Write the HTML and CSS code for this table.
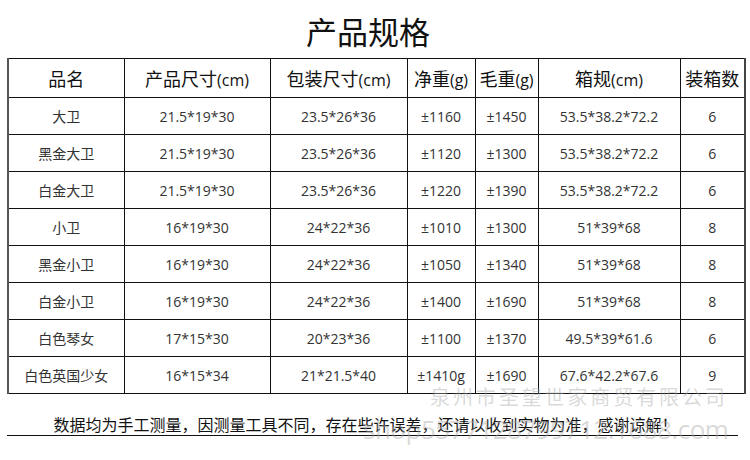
FILE: index.html
```
<!DOCTYPE html>
<html lang="zh">
<head>
<meta charset="utf-8">
<link rel="stylesheet" href="styles.css">
</head>
<body>
<div class="page">
  <h1 class="title">产品规格</h1>
  <table class="spec">
    <colgroup>
      <col style="width:116px"><col style="width:146px"><col style="width:137px"><col style="width:68px"><col style="width:63px"><col style="width:142px"><col style="width:65px">
    </colgroup>
    <thead>
      <tr><th>品名</th><th>产品尺寸<span class="lat">(cm)</span></th><th>包装尺寸<span class="lat">(cm)</span></th><th>净重<span class="lat">(g)</span></th><th>毛重<span class="lat">(g)</span></th><th>箱规<span class="lat">(cm)</span></th><th>装箱数</th></tr>
    </thead>
    <tbody>
      <tr><td>大卫</td><td>21.5*19*30</td><td>23.5*26*36</td><td>±1160</td><td>±1450</td><td>53.5*38.2*72.2</td><td>6</td></tr>
      <tr><td>黑金大卫</td><td>21.5*19*30</td><td>23.5*26*36</td><td>±1120</td><td>±1300</td><td>53.5*38.2*72.2</td><td>6</td></tr>
      <tr><td>白金大卫</td><td>21.5*19*30</td><td>23.5*26*36</td><td>±1220</td><td>±1390</td><td>53.5*38.2*72.2</td><td>6</td></tr>
      <tr><td>小卫</td><td>16*19*30</td><td>24*22*36</td><td>±1010</td><td>±1300</td><td>51*39*68</td><td>8</td></tr>
      <tr><td>黑金小卫</td><td>16*19*30</td><td>24*22*36</td><td>±1050</td><td>±1340</td><td>51*39*68</td><td>8</td></tr>
      <tr><td>白金小卫</td><td>16*19*30</td><td>24*22*36</td><td>±1400</td><td>±1690</td><td>51*39*68</td><td>8</td></tr>
      <tr><td>白色琴女</td><td>17*15*30</td><td>20*23*36</td><td>±1100</td><td>±1370</td><td>49.5*39*61.6</td><td>6</td></tr>
      <tr><td>白色英国少女</td><td>16*15*34</td><td>21*21.5*40</td><td>±1410g</td><td>±1690</td><td>67.6*42.2*67.6</td><td>9</td></tr>
    </tbody>
  </table>
  <p class="note">数据均为手工测量，因测量工具不同，存在些许误差，还请以收到实物为准，感谢谅解！</p>
  <div class="wm wm-name">泉州市圣望世家商贸有限公司</div>
  <div class="wm wm-url">shop5577128799712.1688.com</div>
</div>
</body>
</html>
```
FILE: styles.css
```
html, body {
  margin: 0;
  padding: 0;
  background: #fff;
}
.page {
  position: relative;
  width: 750px;
  height: 460px;
  overflow: hidden;
  font-family: "Open Sans", "Noto Sans CJK SC", sans-serif;
  color: #222;
}
.title {
  margin: 0;
  height: 58px;
  display: flex;
  align-items: center;
  justify-content: center;
  padding-right: 14px;
  box-sizing: border-box;
  font-family: "Noto Sans CJK SC", sans-serif;
  font-weight: 400;
  font-size: 31px;
  color: #111;
  padding-top: 2px;
}
.spec {
  margin-left: 7px;
  width: 737px;
  border-collapse: collapse;
  table-layout: fixed;
  border-left: 2px solid #555;
  border-right: 2px solid #444;
}
.spec th, .spec td {
  border: 1px solid #111;
  text-align: center;
  padding: 0;
  white-space: nowrap;
}
.spec th {
  height: 38px;
  font-family: "Noto Sans CJK SC", sans-serif;
  font-weight: 400;
  font-size: 18px;
  color: #111;
}
.spec th .lat {
  font-family: "Open Sans", sans-serif;
  font-size: 16px;
}
.spec td {
  height: 36px;
  font-size: 14px;
  color: #333;
}
.spec td:first-child {
  font-family: "Noto Sans CJK SC", sans-serif;
}
.note {
  margin: 19px 0 0 7px;
  width: 731px;
  padding: 0 14px 0 0;
  box-sizing: border-box;
  text-align: center;
  font-family: "Noto Sans CJK SC", sans-serif;
  font-size: 16px;
  line-height: 22px;
  color: #111;
  border-bottom: 1px solid #111;
}
.wm {
  position: absolute;
  color: rgba(170, 170, 170, 0.45);
  white-space: nowrap;
}
.wm-name {
  left: 430px;
  top: 383px;
  font-family: "Noto Sans CJK SC", sans-serif;
  font-size: 20px;
  letter-spacing: 2.9px;
  line-height: 28px;
}
.wm-url {
  left: 363px;
  top: 413px;
  font-family: "Open Sans", sans-serif;
  font-size: 26px;
  line-height: 32px;
  letter-spacing: -0.5px;
}
```
